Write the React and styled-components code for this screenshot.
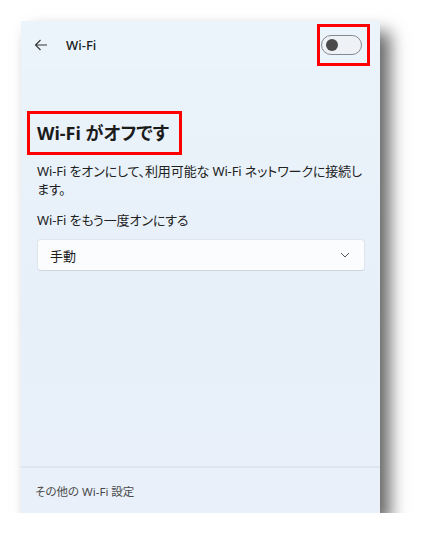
import React from 'react'
import styled, { createGlobalStyle } from 'styled-components'

const GlobalStyle = createGlobalStyle`
  body {
    margin: 0;
    background: #ffffff;
    font-family: "Noto Sans", "Noto Sans CJK JP", sans-serif;
    font-feature-settings: "palt";
    color: #1b1b1b;
  }
`

const Page = styled.div`
  padding: 21px 0 0 21px;
`

const Window = styled.section`
  width: 359px;
  height: 492px;
  display: flex;
  flex-direction: column;
  background: linear-gradient(180deg, #ebf3fa 0%, #e7f0f9 60%, #e9f0f9 100%);
  box-shadow: 10px 11px 16px rgba(0, 0, 0, 0.6);
`

const TitleBar = styled.header`
  height: 48px;
  display: flex;
  align-items: center;
  padding: 0 10px 0 13px;
  background: #ecf4fb;
`

const BackButton = styled.span`
  display: flex;
  width: 14px;
  color: #333;
`

const Title = styled.h1`
  margin: 0 0 0 18px;
  font-size: 13px;
  font-weight: 500;
  flex: 1;
`

const Highlight = styled.div`
  border: 3px solid #ff0000;
  display: inline-flex;
  align-items: center;
  padding: ${p => p.$pad};
  margin-left: ${p => p.$shift || '0'};
`

const Switch = styled.span`
  width: 35px;
  height: 18px;
  border: 1px solid #858a90;
  border-radius: 10px;
  background: #eef2f6;
  display: flex;
  align-items: center;
  padding-left: 4px;
  box-sizing: content-box;
`

const Knob = styled.span`
  width: 12px;
  height: 12px;
  border-radius: 50%;
  background: #4a4a4a;
`

const Content = styled.main`
  flex: 1;
  padding: 42px 15px 0 16px;
`

const Heading = styled.h2`
  margin: 0;
  font-size: 18px;
  font-weight: 700;
  line-height: 26px;
`

const Text = styled.p`
  margin: ${p => p.$margin || '0'};
  font-size: 13px;
  letter-spacing: -0.12px;
  line-height: 18px;
  color: #222;
`

const Select = styled.div`
  margin: 10px 0 0 0;
  height: 30px;
  display: flex;
  align-items: center;
  justify-content: space-between;
  padding: 0 14px 0 12px;
  background: #fbfcfe;
  border: 1px solid #e0e5eb;
  border-bottom-color: #cfd5dc;
  border-radius: 4px;
  font-size: 13px;
`

const Footer = styled.footer`
  height: 45px;
  border-top: 2px solid #dde5ee;
  display: flex;
  align-items: center;
  padding-left: 14px;
  font-size: 11.5px;
  color: #4a4a4a;
`

export default function App() {
  return (
    <>
      <GlobalStyle />
      <Page>
        <Window>
          <TitleBar>
            <BackButton>
              <svg width="14" height="12" viewBox="0 0 14 12" fill="none" stroke="currentColor" strokeWidth="1.1">
                <path d="M13 6H1.5M6.5 1L1.5 6l5 5" />
              </svg>
            </BackButton>
            <Title>Wi-Fi</Title>
            <Highlight $pad="8px 5px 8px 1px">
              <Switch>
                <Knob />
              </Switch>
            </Highlight>
          </TitleBar>
          <Content>
            <Highlight $pad="6px 10px 6px 7px" $shift="-10px">
              <Heading>Wi-Fi がオフです</Heading>
            </Highlight>
            <Text $margin="7px 0 0">
              Wi-Fi をオンにして、利用可能な Wi-Fi ネットワークに接続します。
            </Text>
            <Text $margin="13px 0 0">Wi-Fi をもう一度オンにする</Text>
            <Select>
              <span>手動</span>
              <svg width="10" height="6" viewBox="0 0 10 6" fill="none" stroke="#555" strokeWidth="1">
                <path d="M1 1l4 4 4-4" />
              </svg>
            </Select>
          </Content>
          <Footer>その他の Wi-Fi 設定</Footer>
        </Window>
      </Page>
    </>
  )
}
